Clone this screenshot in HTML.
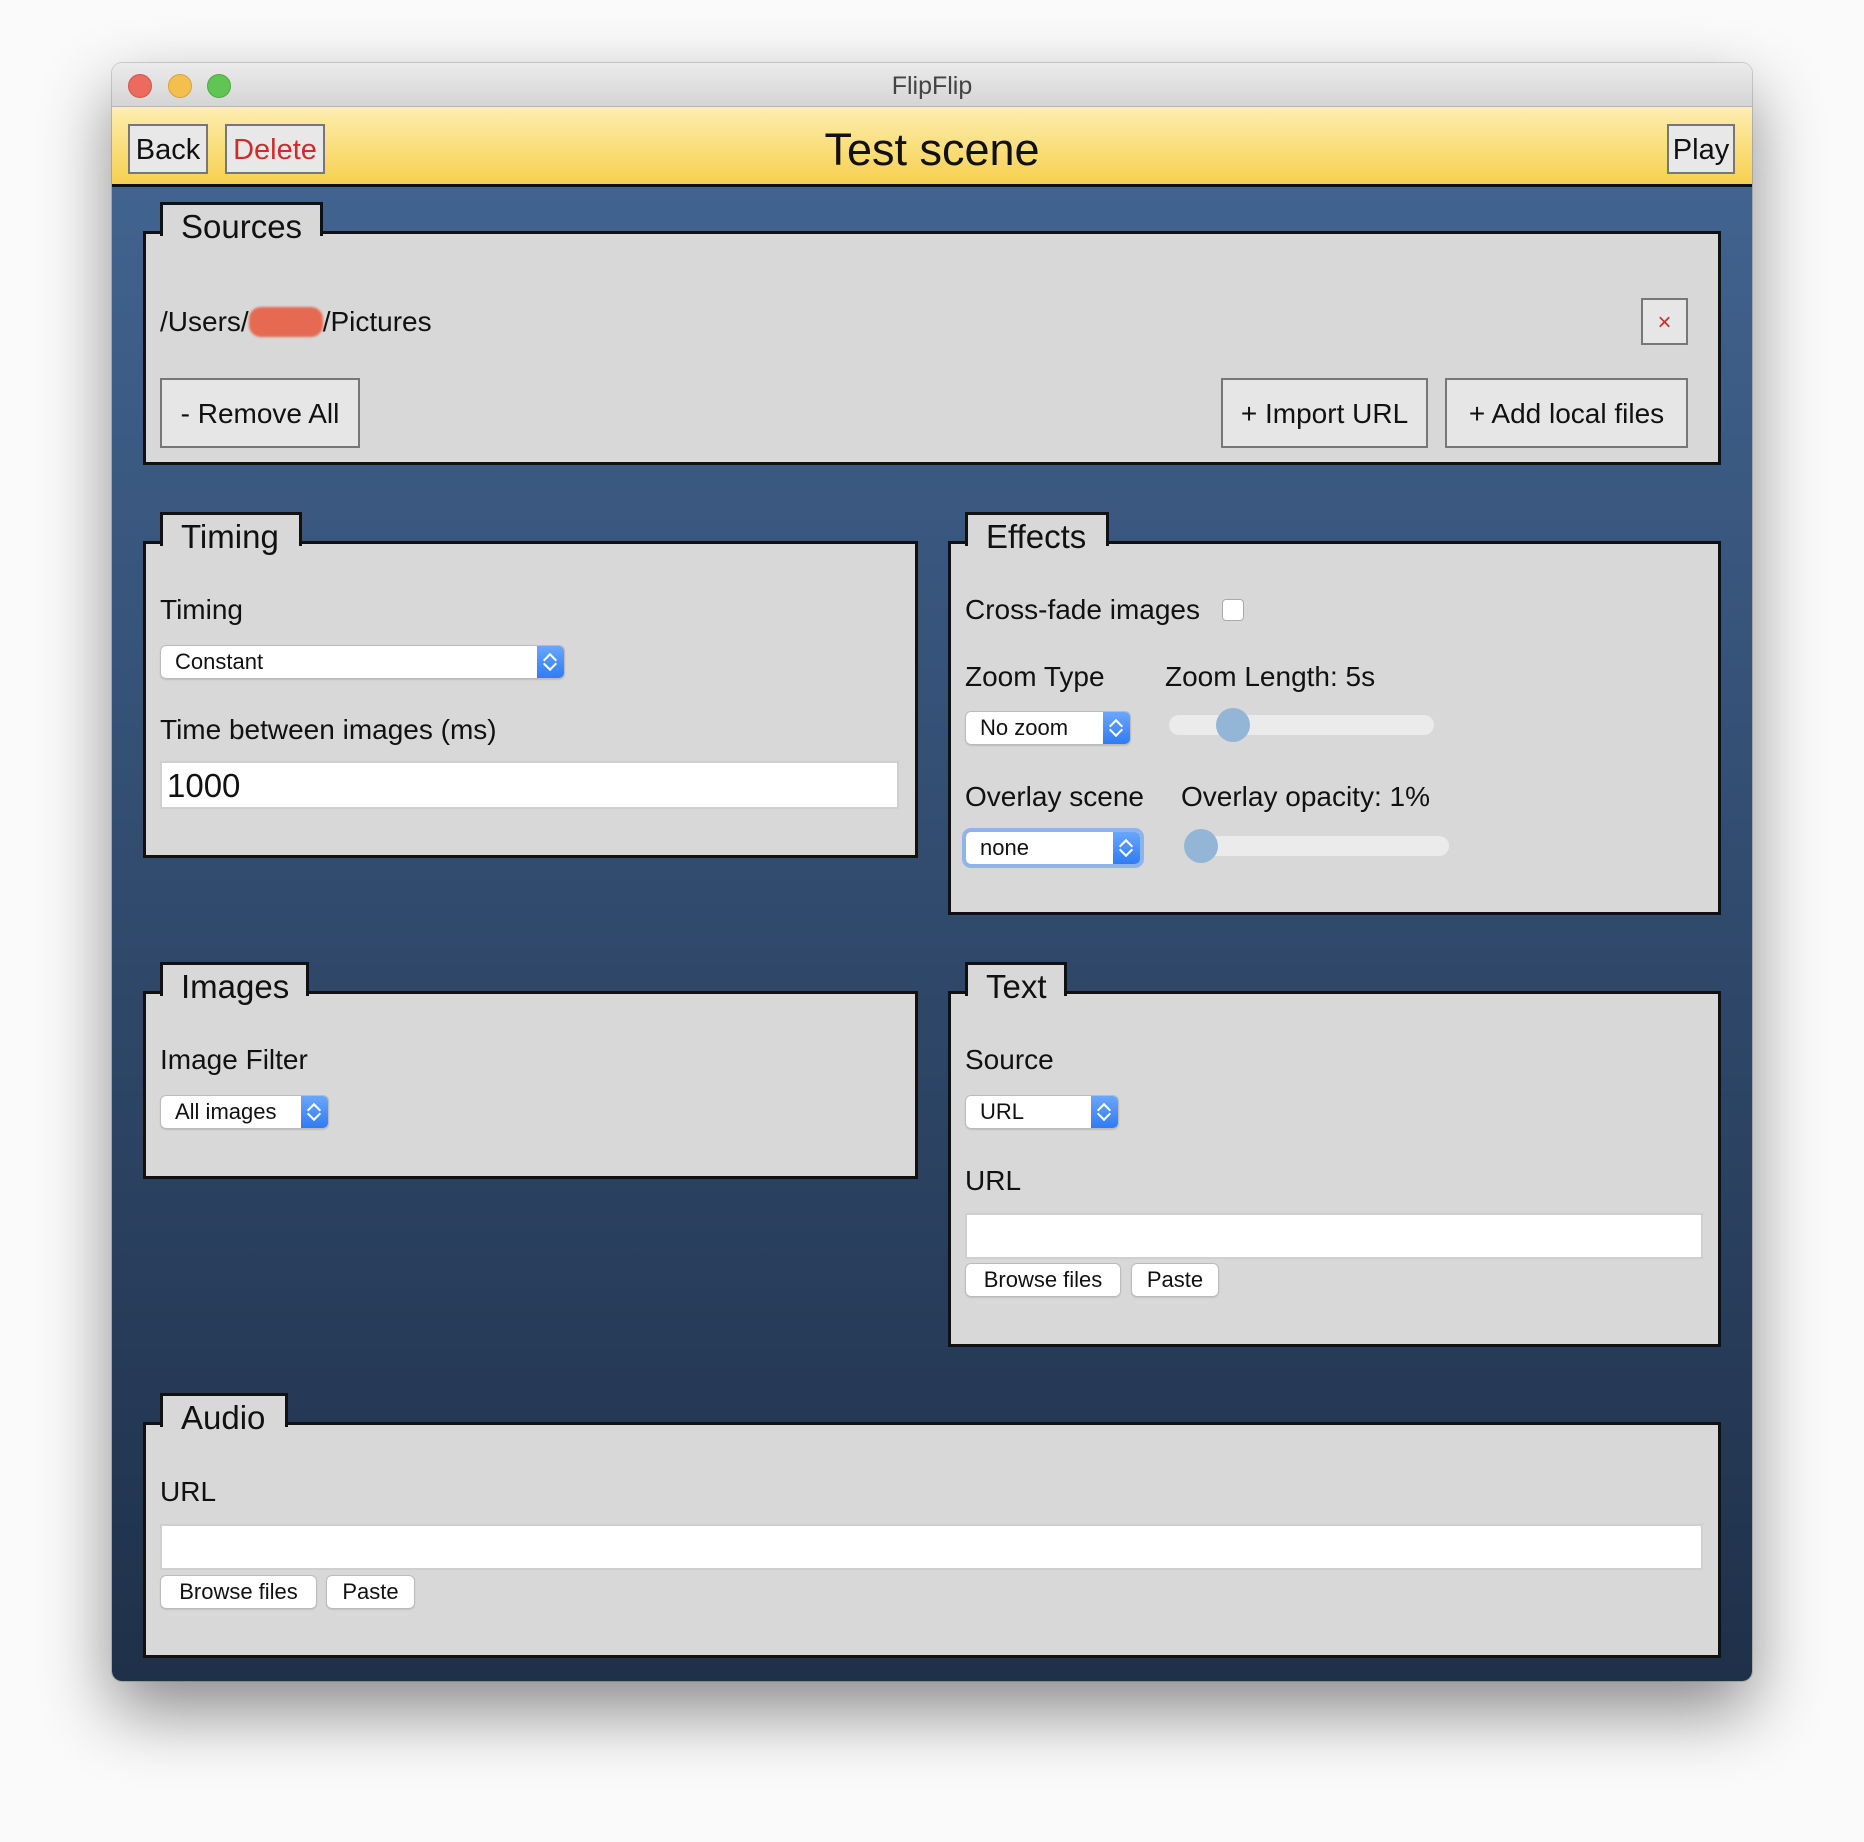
<!DOCTYPE html>
<html><head><meta charset="utf-8">
<style>
*{box-sizing:border-box;margin:0;padding:0}
body{width:1864px;height:1842px;background:#fafafa;font-family:"Liberation Sans",sans-serif;position:relative;overflow:hidden;color:#111}
.a{position:absolute}
#win{left:112px;top:63px;width:1640px;height:1618px;border-radius:10px;overflow:hidden;box-shadow:0 30px 70px rgba(0,0,0,.45),0 0 0 1px rgba(0,0,0,.15)}
#tb{left:0;top:0;width:1640px;height:44px;background:linear-gradient(#ebebeb,#d5d5d5);border-bottom:1px solid #b8b8b8;text-align:center;font-size:25px;line-height:46px;color:#444}
.dot{top:11px;width:24px;height:24px;border-radius:50%}
#hd{left:0;top:44px;width:1640px;height:80px;background:linear-gradient(#fdeeb0,#f6d04e);border-bottom:3px solid #111}
#body{left:0;top:124px;width:1640px;height:1494px;background:linear-gradient(#41638f,#1f3049)}
.hb{background:#e8e8e8;border:2px solid #777;font-size:29px;line-height:48px;text-align:center}
.fs{background:#d8d8d8;border:3px solid #111}
.tab{background:#d8d8d8;border:3px solid #111;border-bottom:none;font-size:33px;padding-left:18px;line-height:44px}
.lb{font-size:28px;line-height:32px}
.bt{background:#e6e6e6;border:2px solid #777;font-size:28px;text-align:center}
.sel{background:#fff;border-radius:5px;box-shadow:0 0 0 1px #bbb,0 1px 2px rgba(0,0,0,.3);font-size:22px;padding-left:14px}
.sel i{position:absolute;right:0;top:0;bottom:0;width:27px;background:linear-gradient(#6aa6fb,#2f7cf4);border-radius:0 5px 5px 0}
.sel i:before,.sel i:after{content:"";position:absolute;left:8px;width:8px;height:8px;border:solid #fff;border-width:2px 0 0 2px}
.sel i:before{top:9px;transform:rotate(45deg)}
.sel i:after{bottom:9px;transform:rotate(225deg)}
.inp{background:#fff;border:2px solid #cfcfcf}
.sb{background:#fff;border-radius:5px;box-shadow:0 0 0 1px #bbb,0 1px 2px rgba(0,0,0,.25);font-size:22px;text-align:center}
.trk{height:20px;border-radius:10px;background:#ebebeb}
.th{width:34px;height:34px;border-radius:50%;background:#93b5d6;top:-7px}
</style></head><body>
<div id="win" class="a">
 <div id="tb" class="a">FlipFlip
  <div class="a dot" style="left:16px;background:#ec6a5e;border:1px solid #d1544a"></div>
  <div class="a dot" style="left:56px;background:#f5bf4f;border:1px solid #d8a23a"></div>
  <div class="a dot" style="left:95px;background:#61c554;border:1px solid #4ea842"></div>
 </div>
 <div id="hd" class="a">
  <div class="a hb" style="left:16px;top:17px;width:80px;height:50px">Back</div>
  <div class="a hb" style="left:113px;top:17px;width:100px;height:50px;color:#d12a2a">Delete</div>
  <div class="a" style="left:0;width:1640px;top:18px;text-align:center;font-size:45px;line-height:50px">Test scene</div>
  <div class="a hb" style="left:1555px;top:17px;width:68px;height:50px">Play</div>
 </div>
 <div id="body" class="a"></div>
</div>
<!-- Sources -->
<div class="a fs" style="left:143px;top:231px;width:1578px;height:234px"></div>
<div class="a tab" style="left:160px;top:202px;width:163px;height:34px">Sources</div>
<div class="a lb" style="left:160px;top:306px">/Users/<span style="display:inline-block;width:74px;height:30px;background:#e66a52;border-radius:12px;vertical-align:-6px;filter:blur(1px)"></span>/Pictures</div>
<div class="a bt" style="left:1641px;top:298px;width:47px;height:47px;line-height:45px;color:#d12a2a;font-size:24px">×</div>
<div class="a bt" style="left:160px;top:378px;width:200px;height:70px;line-height:68px">- Remove All</div>
<div class="a bt" style="left:1221px;top:378px;width:207px;height:70px;line-height:68px">+ Import URL</div>
<div class="a bt" style="left:1445px;top:378px;width:243px;height:70px;line-height:68px">+ Add local files</div>
<!-- Timing -->
<div class="a fs" style="left:143px;top:541px;width:775px;height:317px"></div>
<div class="a tab" style="left:160px;top:512px;width:142px;height:34px">Timing</div>
<div class="a lb" style="left:160px;top:594px">Timing</div>
<div class="a sel" style="left:161px;top:646px;width:403px;height:32px;line-height:32px">Constant<i></i></div>
<div class="a lb" style="left:160px;top:714px">Time between images (ms)</div>
<div class="a inp" style="left:160px;top:761px;width:739px;height:48px;font-size:33px;line-height:46px;padding-left:5px">1000</div>
<!-- Effects -->
<div class="a fs" style="left:948px;top:541px;width:773px;height:374px"></div>
<div class="a tab" style="left:965px;top:512px;width:144px;height:34px">Effects</div>
<div class="a lb" style="left:965px;top:594px">Cross-fade images</div>
<div class="a" style="left:1222px;top:599px;width:22px;height:22px;background:#fff;border:1px solid #aaa;border-radius:4px"></div>
<div class="a lb" style="left:965px;top:661px">Zoom Type</div>
<div class="a lb" style="left:1165px;top:661px">Zoom Length: 5s</div>
<div class="a sel" style="left:966px;top:712px;width:164px;height:32px;line-height:32px">No zoom<i></i></div>
<div class="a trk" style="left:1169px;top:715px;width:265px"><div class="a th" style="left:47px"></div></div>
<div class="a lb" style="left:965px;top:781px">Overlay scene</div>
<div class="a lb" style="left:1181px;top:781px">Overlay opacity: 1%</div>
<div class="a sel" style="left:966px;top:832px;width:174px;height:32px;line-height:32px;box-shadow:0 0 0 4px #8fb4ea">none<i></i></div>
<div class="a trk" style="left:1184px;top:836px;width:265px"><div class="a th" style="left:0"></div></div>
<!-- Images -->
<div class="a fs" style="left:143px;top:991px;width:775px;height:188px"></div>
<div class="a tab" style="left:160px;top:962px;width:149px;height:34px">Images</div>
<div class="a lb" style="left:160px;top:1044px">Image Filter</div>
<div class="a sel" style="left:161px;top:1096px;width:167px;height:32px;line-height:32px">All images<i></i></div>
<!-- Text -->
<div class="a fs" style="left:948px;top:991px;width:773px;height:356px"></div>
<div class="a tab" style="left:965px;top:962px;width:102px;height:34px">Text</div>
<div class="a lb" style="left:965px;top:1044px">Source</div>
<div class="a sel" style="left:966px;top:1096px;width:152px;height:32px;line-height:32px">URL<i></i></div>
<div class="a lb" style="left:965px;top:1165px">URL</div>
<div class="a inp" style="left:965px;top:1213px;width:738px;height:46px"></div>
<div class="a sb" style="left:966px;top:1264px;width:154px;height:32px;line-height:32px">Browse files</div>
<div class="a sb" style="left:1132px;top:1264px;width:86px;height:32px;line-height:32px">Paste</div>
<!-- Audio -->
<div class="a fs" style="left:143px;top:1422px;width:1578px;height:236px"></div>
<div class="a tab" style="left:160px;top:1393px;width:128px;height:34px">Audio</div>
<div class="a lb" style="left:160px;top:1476px">URL</div>
<div class="a inp" style="left:160px;top:1524px;width:1543px;height:46px"></div>
<div class="a sb" style="left:161px;top:1576px;width:155px;height:32px;line-height:32px">Browse files</div>
<div class="a sb" style="left:327px;top:1576px;width:87px;height:32px;line-height:32px">Paste</div>
</body></html>
